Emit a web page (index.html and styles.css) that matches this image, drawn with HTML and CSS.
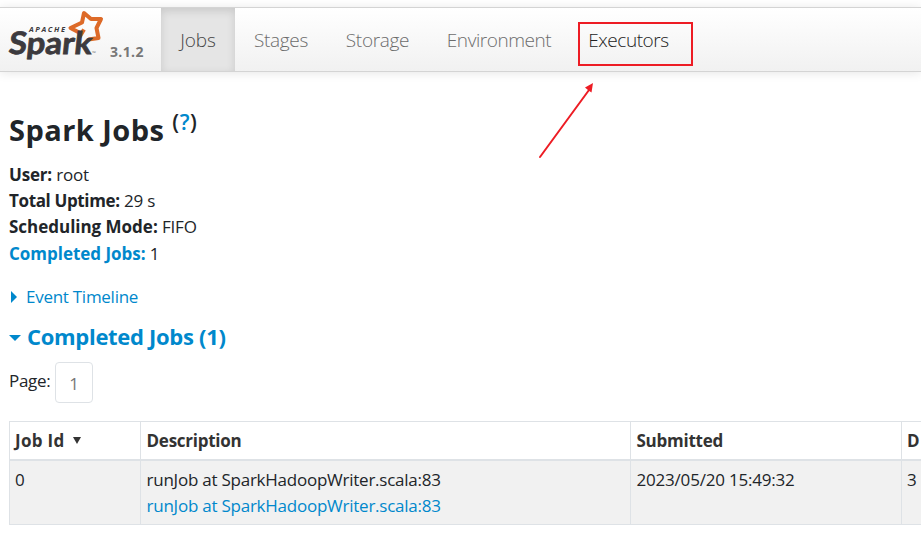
FILE: index.html
```html
<!DOCTYPE html>
<html lang="en">
<head>
<meta charset="utf-8">
<title>Spark Jobs</title>
<link rel="stylesheet" href="styles.css">
</head>
<body>
<nav class="navbar">
  <a class="brand">
    <svg class="logo" width="96" height="52" viewBox="0 0 96 52">
      <path class="star" d="M80.500 30.500 L90.500 29 L88.500 19 L93 10 L83 10 L76 4 L74 13.500 L62.500 19 L73 24.500" />
      <path class="star" d="M71.500 28 L76 20.500" />
      <text class="logo-small" x="21" y="23" textLength="36">APACHE</text>
      <text class="logo-text" transform="translate(0 45) skewX(-6)" x="0" y="0" textLength="83" lengthAdjust="spacingAndGlyphs">Spark</text>
      <text class="logo-tm" x="84" y="46">™</text>
    </svg>
    <span class="version">3.1.2</span>
  </a>
  <ul class="nav">
    <li class="jobs active"><a>Jobs</a></li>
    <li class="stages"><a>Stages</a></li>
    <li class="storage"><a>Storage</a></li>
    <li class="environment"><a>Environment</a></li>
    <li class="executors"><a>Executors</a></li>
  </ul>
</nav>
<div class="highlight"></div>
<svg class="arrow" width="60" height="80" viewBox="0 0 60 80">
  <path d="M5 77 L54 10" stroke="#ed1c24" stroke-width="2" stroke-linecap="round"/>
  <path d="M58 3 L56.500 12.500 L53.500 10.500 L50 7.500 Z" fill="#ed1c24"/>
</svg>
<main>
  <h3><span>Spark Jobs</span> <sup>(<a>?</a>)</sup></h3>
  <ul class="summary">
    <li><strong>User:</strong> root</li>
    <li><strong class="uptime">Total Uptime:</strong> 29 s</li>
    <li><strong class="mode">Scheduling Mode:</strong> FIFO</li>
    <li class="done"><a><strong class="mode">Completed Jobs:</strong></a> 1</li>
  </ul>
  <a class="timeline"><i class="caret-right"></i><span>Event Timeline</span></a>
  <h4><i class="caret-down"></i><span>Completed Jobs (1)</span></h4>
  <div class="pager"><span>Page:</span><a>1</a></div>
  <table>
    <thead>
      <tr><th class="c1">Job Id <i class="sort"></i></th><th class="c2">Description</th><th class="c3">Submitted</th><th class="c4">D</th></tr>
    </thead>
    <tbody>
      <tr><td>0</td><td><span>runJob at SparkHadoopWriter.scala:83</span><br><a>runJob at SparkHadoopWriter.scala:83</a></td><td class="date">2023/05/20 15:49:32</td><td>3</td></tr>
    </tbody>
  </table>
</main>
</body>
</html>
```
FILE: styles.css
```css
* { box-sizing: border-box; }
body {
  margin: 0;
  padding-top: 7px;
  height: 540px;
  overflow: hidden;
  background: #fff;
  color: #212529;
  font: 17px/26px "Open Sans", "Noto Sans", sans-serif;
  letter-spacing: -0.33px;
}
a { color: #0088cc; }
strong, th, h3, h4 { font-weight: 700; }
ul { list-style: none; margin: 0; padding: 0; }
.navbar {
  display: flex;
  height: 65px;
  border-top: 1px solid #d4d4d4;
  border-bottom: 1px solid #d4d4d4;
  background: linear-gradient(#fff, #f1f1f1);
  box-shadow: 0 1px 10px rgba(0, 0, 0, 0.1);
}
.brand { display: flex; width: 161px; padding-left: 8px; }
.logo { margin-top: 1px; overflow: visible; }
.star { fill: none; stroke: #dd6a28; stroke-width: 4; stroke-linejoin: round; }
.logo-small { font: italic 700 7.500px "Open Sans", sans-serif; fill: #3c3a3e; letter-spacing: 0; }
.logo-text { font: 700 31px Lato, sans-serif; fill: #3c3a3e; stroke: #3c3a3e; stroke-width: 0.800; letter-spacing: 0; }
.logo-tm { font: 5px "Open Sans", sans-serif; fill: #777; }
.version { margin: 31px 0 0 6px; color: #777; font-size: 14px; font-weight: 700; letter-spacing: 0.35px; }
.nav { display: flex; }
.nav li { display: flex; align-items: center; justify-content: center; height: 63px; padding-top: 1px; }
.nav a { color: #6c6c6c; font-size: 19px; font-weight: 300; white-space: nowrap; }
.nav .jobs { width: 74px; }
.nav .stages { width: 92px; }
.nav .storage { width: 101px; }
.nav .environment { width: 142px; }
.nav .executors { width: 117px; }
.nav .environment a, .nav .executors a { letter-spacing: -0.45px; }
.nav .active { background: #e5e5e5; box-shadow: inset 0 3px 8px rgba(0, 0, 0, 0.125); }
.nav .active a { color: #444; letter-spacing: -0.1px; }
.nav .executors a { color: #222; }
.highlight { position: absolute; left: 578px; top: 22px; width: 115px; height: 44px; border: 2px solid #ed1c24; }
.arrow { position: absolute; left: 535px; top: 80px; fill: none; }
main { padding: 36px 0 0 9px; }
h3 { margin: 0; height: 54px; font-size: 29px; line-height: 43px; letter-spacing: 0.45px; }
sup { position: relative; top: -11px; font-size: 21.500px; font-weight: 600; line-height: 0; vertical-align: baseline; letter-spacing: 0.5px; }
.summary { height: 105px; letter-spacing: -0.2px; }
.summary .uptime { letter-spacing: -0.36px; }
.summary .mode { letter-spacing: -0.02px; }
.summary .done { padding-top: 1px; }
.timeline { display: flex; align-items: center; height: 26px; margin-top: 17px; letter-spacing: -0.27px; }
.caret-right { width: 17px; height: 12px; }
.caret-right::before { content: ""; display: block; border-left: 6px solid #08c; border-top: 6px solid transparent; border-bottom: 6px solid transparent; width: 0; margin-left: 2px; }
h4 { display: flex; align-items: center; margin: 10px 0 0; height: 32px; color: #08c; font-size: 22px; letter-spacing: -0.3px; }
.caret-down { width: 18px; }
.caret-down::before { content: ""; display: block; width: 0; border-top: 6px solid #08c; border-left: 6px solid transparent; border-right: 6px solid transparent; margin-top: 3px; }
.pager { display: flex; margin-top: 10px; height: 41px; }
.pager span { width: 46px; padding-top: 6px; }
.pager a { width: 38px; height: 41px; padding-top: 8px; border: 1px solid #dee2e6; border-radius: 4px; color: #777; text-align: center; }
table { width: 912px; margin-top: 18px; border-collapse: collapse; table-layout: fixed; letter-spacing: -0.24px; }
th, td { border: 1px solid #dee2e6; padding: 5px 0 5px 5.500px; text-align: left; vertical-align: top; }
th { height: 38px; padding-top: 6px; padding-bottom: 4px; color: #333; border-bottom-width: 2px; letter-spacing: -0.25px; }
td { height: 64px; padding-top: 6px; background: #f1f1f1; }
th:last-child, td:last-child { border-right: 0; padding-left: 5px; }
.date { letter-spacing: -0.2px; }
.c1 { width: 131px; padding-left: 5px; letter-spacing: 0.3px; }
td:first-child { padding-left: 5px; }
.c2 { width: 490px; }
.c3 { width: 271px; }
.sort { display: inline-block; margin: 0 0 3px 4px; border-top: 7px solid #333; border-left: 4px solid transparent; border-right: 4px solid transparent; }
```
